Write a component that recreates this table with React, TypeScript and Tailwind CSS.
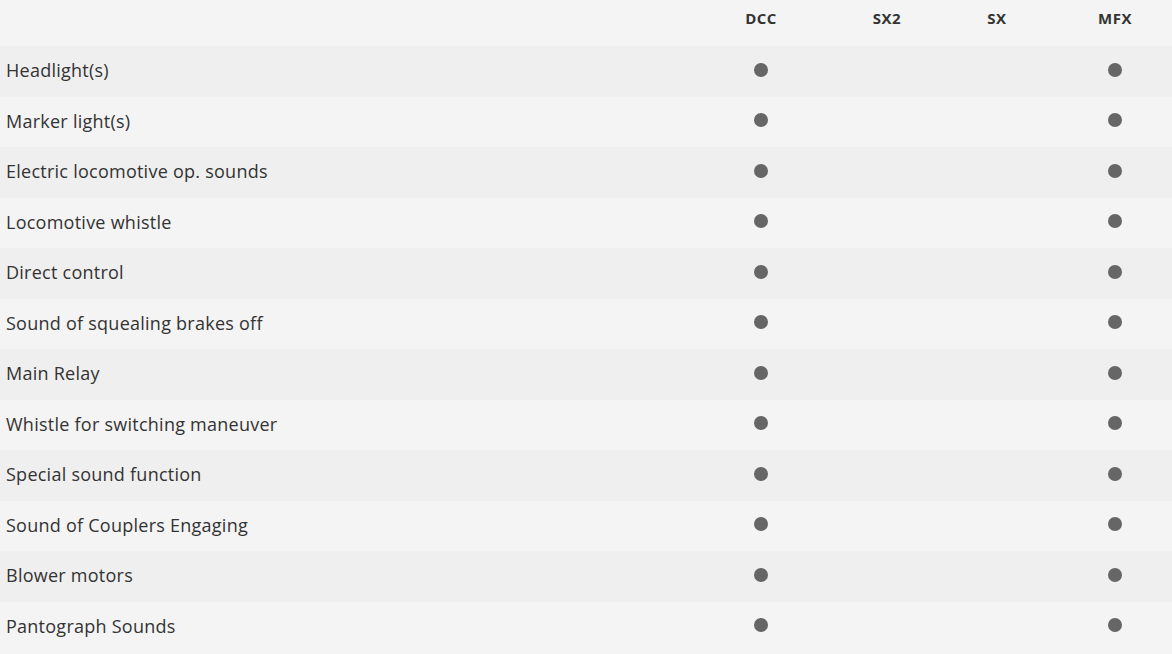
import React from "react";

const features = [
  "Headlight(s)",
  "Marker light(s)",
  "Electric locomotive op. sounds",
  "Locomotive whistle",
  "Direct control",
  "Sound of squealing brakes off",
  "Main Relay",
  "Whistle for switching maneuver",
  "Special sound function",
  "Sound of Couplers Engaging",
  "Blower motors",
  "Pantograph Sounds",
];

const protocols = ["DCC", "SX2", "SX", "MFX"];
const support = [true, false, false, true];

const Dot: React.FC = () => (
  <span className="block w-[14px] h-[14px] rounded-full bg-[#666666] -mt-[3px]" />
);

const App: React.FC = () => {
  return (
    <div className="w-[1172px] h-[654px] bg-[#f4f4f4] text-[#333333] font-['Open_Sans',sans-serif] overflow-hidden">
      {/* Header */}
      <div className="grid grid-cols-[684px_154px_98px_122px_114px] h-[46px]">
        <div />
        {protocols.map((p) => (
          <div
            key={p}
            className="flex justify-center pt-[8px] text-[15px] font-bold tracking-[0.5px] leading-5"
          >
            {p}
          </div>
        ))}
      </div>

      {/* Rows */}
      {features.map((f, i) => (
        <div
          key={f}
          className={`grid grid-cols-[684px_154px_98px_122px_114px] h-[50.5px] items-center ${
            i % 2 === 0 ? "bg-[#efefef]" : "bg-[#f4f4f4]"
          }`}
        >
          <div className="pl-[6px] text-[18px] tracking-[0.25px] leading-6 -mt-[2px]">{f}</div>
          {support.map((s, j) => (
            <div key={j} className="flex justify-center">
              {s && <Dot />}
            </div>
          ))}
        </div>
      ))}
    </div>
  );
};

export default App;
